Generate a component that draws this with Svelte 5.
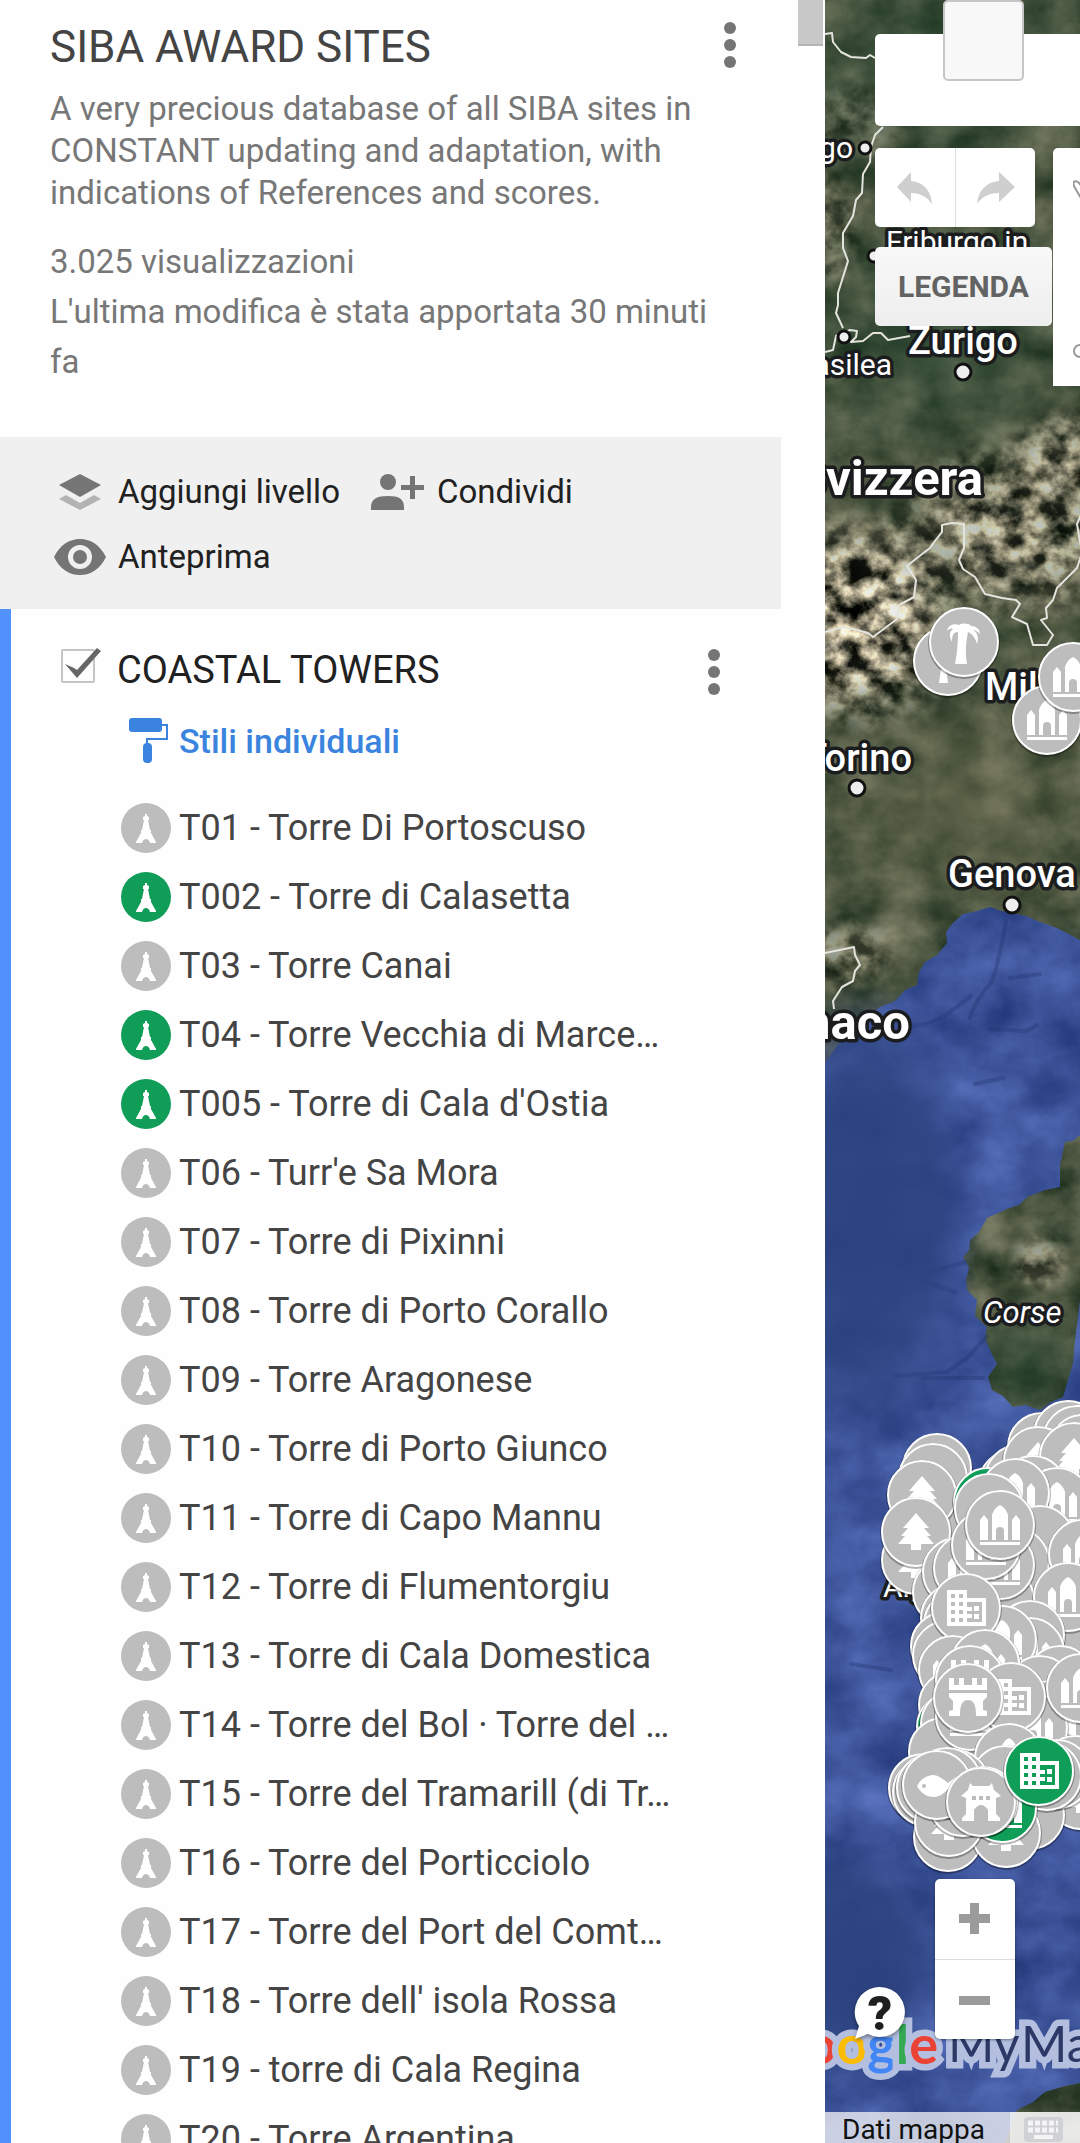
<!--
Map editor view
Side panel with the layer contents, next to the satellite map and its controls.
-->

<script lang="ts">
  interface Place {
    name: string
    done?: boolean
  }

  interface Pin {
    x: number
    y: number
    icon?: string
    done?: boolean
  }

  const places: Place[] = [
    { name: 'T01 - Torre Di Portoscuso' },
    { name: 'T002 - Torre di Calasetta', done: true },
    { name: 'T03 - Torre Canai' },
    { name: 'T04 - Torre Vecchia di Marce…', done: true },
    { name: "T005 - Torre di Cala d'Ostia", done: true },
    { name: "T06 - Turr'e Sa Mora" },
    { name: 'T07 - Torre di Pixinni' },
    { name: 'T08 - Torre di Porto Corallo' },
    { name: 'T09 - Torre Aragonese' },
    { name: 'T10 - Torre di Porto Giunco' },
    { name: 'T11 - Torre di Capo Mannu' },
    { name: 'T12 - Torre di Flumentorgiu' },
    { name: 'T13 - Torre di Cala Domestica' },
    { name: 'T14 - Torre del Bol · Torre del …' },
    { name: 'T15 - Torre del Tramarill (di Tr…' },
    { name: 'T16 - Torre del Porticciolo' },
    { name: 'T17 - Torre del Port del Comt…' },
    { name: "T18 - Torre dell' isola Rossa" },
    { name: 'T19 - torre di Cala Regina' },
    { name: 'T20 - Torre Argentina' },
  ]

  // Drawn in order, later pins lie over earlier ones
  const pins: Pin[] = [
    { x: 123, y: 661, icon: 'trunk' },
    { x: 139, y: 642, icon: 'palm' },
    { x: 222, y: 720, icon: 'ruins' },
    { x: 248, y: 677, icon: 'ruins' },
    { x: 112, y: 1468 },
    { x: 108, y: 1478 },
    { x: 120, y: 1530 },
    { x: 97, y: 1495, icon: 'tree' },
    { x: 91, y: 1560, icon: 'tree' },
    { x: 91, y: 1532, icon: 'tree' },
    { x: 217, y: 1447 },
    { x: 243, y: 1435 },
    { x: 252, y: 1440 },
    { x: 258, y: 1449 },
    { x: 188, y: 1484 },
    { x: 194, y: 1479 },
    { x: 213, y: 1461, icon: 'tree' },
    { x: 249, y: 1457, icon: 'tree' },
    { x: 163, y: 1502, done: true },
    { x: 250, y: 1530 },
    { x: 208, y: 1490 },
    { x: 232, y: 1502, icon: 'ruins' },
    { x: 190, y: 1493, icon: 'ruins' },
    { x: 215, y: 1540 },
    { x: 210, y: 1580 },
    { x: 164, y: 1508 },
    { x: 122, y: 1592 },
    { x: 132, y: 1572 },
    { x: 190, y: 1562 },
    { x: 175, y: 1600 },
    { x: 143, y: 1568, icon: 'ruins' },
    { x: 175, y: 1565, icon: 'ruins' },
    { x: 161, y: 1545, icon: 'ruins' },
    { x: 175, y: 1525, icon: 'ruins' },
    { x: 240, y: 1640, icon: 'ruins' },
    { x: 250, y: 1620 },
    { x: 258, y: 1554, icon: 'ruins' },
    { x: 243, y: 1597, icon: 'ruins' },
    { x: 130, y: 1618 },
    { x: 133, y: 1624 },
    { x: 205, y: 1635 },
    { x: 120, y: 1646 },
    { x: 122, y: 1655 },
    { x: 205, y: 1652, icon: 'ruins' },
    { x: 177, y: 1640, icon: 'ruins' },
    { x: 141, y: 1608, icon: 'building' },
    { x: 235, y: 1680 },
    { x: 215, y: 1690 },
    { x: 128, y: 1670, icon: 'ruins' },
    { x: 160, y: 1664, icon: 'ruins' },
    { x: 128, y: 1705 },
    { x: 126, y: 1727, done: true },
    { x: 130, y: 1724 },
    { x: 225, y: 1715 },
    { x: 243, y: 1732, icon: 'ruins' },
    { x: 170, y: 1730 },
    { x: 118, y: 1752 },
    { x: 145, y: 1716, icon: 'ruins' },
    { x: 208, y: 1728, icon: 'ruins' },
    { x: 256, y: 1688, icon: 'ruins' },
    { x: 145, y: 1680, icon: 'castle' },
    { x: 186, y: 1697, icon: 'building' },
    { x: 143, y: 1698, icon: 'castle' },
    { x: 184, y: 1758, icon: 'ruins' },
    { x: 180, y: 1780 },
    { x: 250, y: 1770 },
    { x: 256, y: 1795, icon: 'tree' },
    { x: 205, y: 1815 },
    { x: 98, y: 1788 },
    { x: 102, y: 1792 },
    { x: 106, y: 1788 },
    { x: 123, y: 1837 },
    { x: 181, y: 1833, icon: 'tree' },
    { x: 124, y: 1822, icon: 'tree' },
    { x: 138, y: 1802 },
    { x: 130, y: 1784 },
    { x: 122, y: 1782 },
    { x: 112, y: 1785, icon: 'fish' },
    { x: 232, y: 1774 },
    { x: 222, y: 1776 },
    { x: 177, y: 1808, icon: 'ruins', done: true },
    { x: 158, y: 1801 },
    { x: 156, y: 1802, icon: 'temple' },
    { x: 214, y: 1771, icon: 'building', done: true },
  ]

  let visible = $state(true)
  let search = $state('')
</script>

{#snippet moreIcon()}
  <svg width="12" height="46" viewBox="0 0 12 46" aria-hidden="true">
    <circle cx="6" cy="6" r="6" />
    <circle cx="6" cy="23" r="6" />
    <circle cx="6" cy="40" r="6" />
  </svg>
{/snippet}

<div class="app">
  <aside class="panel">
    <div class="content">
      <header class="info">
        <div class="title-row">
          <h1>SIBA AWARD SITES</h1>
          <button class="more" aria-label="Opzioni mappa">{@render moreIcon()}</button>
        </div>
        <p class="description">
          A very precious database of all SIBA sites in CONSTANT updating and
          adaptation, with indications of References and scores.
        </p>
        <p class="meta">
          3.025 visualizzazioni<br />
          L'ultima modifica è stata apportata 30 minuti fa
        </p>
      </header>

      <div class="toolbar">
        <button>
          <svg viewBox="0 0 54 40" aria-hidden="true">
            <path d="M5 27l7-4 14 8 14-8 7 4-21 11z" fill="#b3b3b3" />
            <path d="M26 2l21 11-21 12L5 13z" fill="#757575" />
          </svg>
          Aggiungi livello
        </button>
        <button>
          <svg viewBox="0 0 54 40" fill="#757575" aria-hidden="true">
            <circle cx="15" cy="10" r="8" />
            <path d="M-2 38v-3c0-8 6-11 17-11s16 3 16 11v3zM37 4h5v9h9v5h-9v9h-5v-9h-9v-5h9z" />
          </svg>
          Condividi
        </button>
        <button>
          <svg viewBox="0 0 54 40" aria-hidden="true">
            <path
              fill="#757575"
              fill-rule="evenodd"
              d="M0 20C6 8 15 2 26 2s20 6 26 18c-6 12-15 18-26 18S6 32 0 20zM26 8a12 12 0 1 0 0 24 12 12 0 0 0 0-24z"
            />
            <circle cx="26" cy="20" r="7" fill="#757575" />
          </svg>
          Anteprima
        </button>
      </div>

      <section class="layer">
        <div class="layer-head">
          <label>
            <span class="check">
              <input type="checkbox" bind:checked={visible} />
              {#if visible}
                <svg width="38" height="34" viewBox="0 0 38 34" aria-hidden="true">
                  <path d="M1 17l9 4 3 2L33 1l4 3-24 27z" fill="#666" />
                </svg>
              {/if}
            </span>
            <span class="layer-name">COASTAL TOWERS</span>
          </label>
          <button class="more" aria-label="Opzioni livello">{@render moreIcon()}</button>
        </div>

        <button class="styles">
          <svg width="40" height="46" viewBox="0 0 40 46" aria-hidden="true">
            <rect width="33" height="14" rx="3" fill="#3a84df" />
            <path d="M33 7h5v14H18v6" fill="none" stroke="#3a84df" stroke-width="2" />
            <rect x="14" y="25" width="9" height="20" rx="4" fill="#3a84df" />
          </svg>
          Stili individuali
        </button>

        <ul>
          {#each places as place}
            <li>
              <svg width="50" height="50" viewBox="0 0 50 50" aria-hidden="true">
                <circle cx="25" cy="25" r="25" fill={place.done ? '#109d58' : '#bdbdbd'} />
                <path
                  fill="#fff"
                  d="M24 11h2v2l2 1v3h-1l2 10h1v3l5 9v1h-6c-1-3-2-4-4-4s-3 1-4 4h-6v-1l5-9v-3h1l2-10h-1v-3l2-1z"
                />
              </svg>
              {place.name}
            </li>
          {/each}
        </ul>
      </section>
    </div>
    <div class="scrollbar"></div>
  </aside>

  <main class="map">
    <svg class="canvas" viewBox="0 0 255 2143" preserveAspectRatio="xMinYMin slice">
      <defs>
        <filter id="land" x="0" y="0" width="1" height="1" color-interpolation-filters="sRGB">
          <feTurbulence type="fractalNoise" baseFrequency="0.02 0.025" numOctaves="5" seed="4" />
          <feColorMatrix
            values="0.55 0.1 0 0 -0.03
                    0.45 0.1 0 0 0.06
                    0.42 0.1 0 0 -0.01
                    0 0 0 0 1"
          />
        </filter>
        <filter id="alps" x="0" y="0" width="1" height="1" color-interpolation-filters="sRGB">
          <feTurbulence type="fractalNoise" baseFrequency="0.045 0.05" numOctaves="5" seed="21" />
          <feColorMatrix
            values="2.7 0.4 0 0 -1
                    2.5 0.4 0 0 -0.93
                    2.2 0.4 0 0 -0.86
                    0 0 0 0 1"
          />
        </filter>
        <filter id="water" x="0" y="0" width="1" height="1" color-interpolation-filters="sRGB">
          <feTurbulence type="fractalNoise" baseFrequency="0.014 0.018" numOctaves="5" seed="12" />
          <feColorMatrix
            values="0.28 0 0 0 0.1
                    0.3 0 0 0 0.18
                    0.35 0 0 0 0.43
                    0 0 0 0 1"
          />
          <feComposite in2="SourceGraphic" operator="in" />
        </filter>
        <radialGradient id="peak">
          <stop offset="0" stop-color="#fff" />
          <stop offset="0.5" stop-color="#fff" stop-opacity="0.8" />
          <stop offset="1" stop-color="#fff" stop-opacity="0" />
        </radialGradient>
        <radialGradient id="deep">
          <stop offset="0" stop-color="#2c437f" />
          <stop offset="0.6" stop-color="#2c437f" stop-opacity="0.8" />
          <stop offset="1" stop-color="#2c437f" stop-opacity="0" />
        </radialGradient>
        <radialGradient id="plain">
          <stop offset="0" stop-color="#686a4e" stop-opacity="0.6" />
          <stop offset="1" stop-color="#686a4e" stop-opacity="0" />
        </radialGradient>
        <radialGradient id="forest">
          <stop offset="0" stop-color="#24442f" stop-opacity="0.6" />
          <stop offset="1" stop-color="#24442f" stop-opacity="0" />
        </radialGradient>
        <mask id="mountains">
          <ellipse cx="30" cy="620" rx="120" ry="120" fill="url(#peak)" />
          <ellipse cx="190" cy="530" rx="140" ry="100" fill="url(#peak)" opacity="0.75" />
          <ellipse cx="255" cy="450" rx="80" ry="50" fill="url(#peak)" opacity="0.6" />
          <ellipse cx="215" cy="1262" rx="34" ry="34" fill="url(#peak)" opacity="0.5" />
          <ellipse cx="20" cy="955" rx="60" ry="40" fill="url(#peak)" opacity="0.45" />
          <ellipse cx="30" cy="120" rx="60" ry="50" fill="url(#peak)" opacity="0.25" />
          <ellipse cx="5" cy="230" rx="35" ry="70" fill="url(#peak)" opacity="0.35" />
        </mask>

        <g id="ruins">
          <path d="M-20 15V-5l4-5 4 5v20zM12 15V-5l4-5 4 5v20zM-8 15v-25q2-7 8-10 6 3 8 10v25H4V6a4 4 0 0 0-8 0v9zM-20 17h40v3h-40z" />
        </g>
        <g id="tree">
          <path d="M0-19l13 15H8l7 8h-4l7 8H5v6H-5v-6h-13l7-8h-4l7-8h-5z" />
        </g>
        <g id="trunk">
          <path d="M-9 22l2-14h5l2 14z" />
        </g>
        <g id="palm">
          <path d="M-9 22c2-10 3-20 3-32-5 0-6 4-6 10-3-6-3-10 1-13-2-1-4 0-6 2 1-5 6-8 12-6 5-3 11-1 12 1 5 0 9 3 9 8-3-3-5-4-7-4 5 3 6 8 4 14-2-7-5-10-9-12-2 10-3 21-1 32z" />
        </g>
        <g id="building">
          <path
            fill-rule="evenodd"
            d="M-19-18H1v8h19v28h-39zM-15-14v4h4v-4zM-7-14v4h4v-4zM-15-6v4h4v-4zM-7-6v4h4v-4zM-15 2v4h4V2zM-7 2v4h4V2zM-15 10v4h4v-4zM-7 10v4h4v-4zM1-6v5h5v4H1v3h5v4H1v4h15V-6zM8-2h5v5H8zM8 6h5v5H8z"
          />
        </g>
        <g id="castle">
          <path d="M-19-20h5v7h5v-7h5v7h8v-7h5v7h5v-7h5v12h-38zM-19-5h38v4l-4 4v9l4 1v5H8c0-11-2-16-8-16s-8 5-8 16h-11v-5l4-1V3l-4-4z" />
        </g>
        <g id="fish">
          <path fill-rule="evenodd" d="M-20 1c4-8 11-11 17-11 6 1 10 5 14 8l8-6v17l-8-5c-4 4-8 8-14 8C-9 12-16 9-20 1zm7-2a2 2 0 1 0 0 4 2 2 0 0 0 0-4z" />
        </g>
        <g id="temple">
          <path
            fill-rule="evenodd"
            d="M-11-19l3 3H8l3-3 2 7 7 6-5 2v16l4 4v3H7V8Q0-2-7 8v11h-12v-3l4-4V-4l-5-2 7-6zM-9-6v4h4v-4zM-2-6v4h4v-4zM5-6v4h4v-4z"
          />
        </g>
      </defs>

      <rect width="255" height="2143" filter="url(#land)" />
      <ellipse cx="110" cy="340" rx="200" ry="150" fill="url(#forest)" />
      <ellipse cx="120" cy="60" rx="200" ry="150" fill="url(#forest)" />
      <ellipse cx="140" cy="810" rx="190" ry="130" fill="url(#plain)" />
      <ellipse cx="200" cy="1370" rx="80" ry="80" fill="url(#forest)" />
      <g mask="url(#mountains)">
        <rect width="255" height="1400" filter="url(#alps)" />
      </g>

      <g filter="url(#water)">
        <path
          d="M0 1063L20 1035 38 1020 55 1007 70 1001 80 990 92 985 94 972 100 962 112 955 122 943 121 932 128 923
             138 914 148 912 165 907 176 911 188 913 201 916 215 922 232 928 255 940V1135L248 1141 240 1142 235 1165
             235 1187 220 1190 202 1197 194 1205 182 1209 162 1218 154 1232 145 1240 144 1250 138 1257 144 1268
             141 1280 142 1290 152 1300 150 1316 162 1327 160 1338 165 1350 172 1364 163 1377 167 1390 178 1396
             188 1407 200 1405 215 1410 226 1402 238 1397 243 1380 248 1363 250 1340 253 1317 255 1300V2083L240
             2086 220 2092 208 2102 192 2110 180 2143H0z"
        />
      </g>
      <g class="trenches">
        <path d="M88 1026q20-2 34-12t24-18M145 1018q6-20 22-36 8-26 14-60M164 1029l38 2 10-6M185 978l30-4M70 1376l52-4 20-14 20-22M98 1378h60M100 1282l30 10M140 1262l-34 10M26 1664l40 6M150 1084l28-6" />
      </g>
      <ellipse cx="40" cy="1220" rx="115" ry="240" fill="url(#deep)" />
      <ellipse cx="10" cy="1960" rx="120" ry="130" fill="url(#deep)" />

      <g class="borders">
        <path d="M0 34l7-1 1 9 8 10 10 5 15 1 4-3 5 3M58 127l-8 8-4 12-1 15-7 12-1 19-6 7-3 16-10 17v15l5 13-10 32v12l-2 8 7 15M0 352l8-2 3-14 14-6 7 1-1 6-5 5 12-1 10-8h8l7 7 22-4" />
        <path d="M0 632l18-5 10 2 15 4 5 4 24-18 2-14 15-8 2-17-9-14 10-8 13-10 5-7 7-9v-7l10-2 12 1v24l-5 12 4 9 12 8 10 17 17 4 14 2 4 4-8 13 15 7 6 21h14l6-10-12-15 6-2-1-10 7-8 4-12 20-20 5-15-3-17-2-12 4-9 15 2 6-6" />
        <path d="M0 953l29-6 1 8 5 10-5 6-2 10-11 6-9 14 1 8" />
      </g>

      <g class="labels">
        <text x="28" y="158" text-anchor="end">Lussemburgo</text>
        <text x="61" y="252">Friburgo in</text>
        <text x="67" y="375" text-anchor="end">Basilea</text>
        <text class="city" x="83" y="354">Zurigo</text>
        <text class="country" x="158" y="495" text-anchor="end">Svizzera</text>
        <text class="city" x="160" y="700">Milano</text>
        <text class="city" x="87" y="771" text-anchor="end">Torino</text>
        <text class="city" x="123" y="887">Genova</text>
        <text class="country" x="85" y="1039" text-anchor="end">Monaco</text>
        <text class="region" x="158" y="1323">Corse</text>
        <text x="58" y="1597">Alghero</text>
      </g>

      <g class="towns">
        <circle cx="40" cy="148" r="6" />
        <circle cx="49" cy="256" r="6" />
        <circle cx="19" cy="337" r="6" />
        <circle cx="138" cy="372" r="8" />
        <circle cx="32" cy="788" r="8" />
        <circle cx="187" cy="905" r="8" />
      </g>

      {#each pins as pin}
        <g transform="translate({pin.x} {pin.y})">
          <circle cy="1" r="36" fill="#000" opacity="0.3" />
          <circle r="34" fill={pin.done ? '#109d58' : '#bdbdbd'} stroke="#fff" stroke-width="2" />
          {#if pin.icon}
            <use href="#{pin.icon}" fill="#fff" />
          {/if}
        </g>
      {/each}

      <g class="logo">
        <text class="google" x="113" y="2064" text-anchor="end"
          ><tspan fill="#4285f4">G</tspan><tspan fill="#ea4335">o</tspan><tspan fill="#fbbc04">o</tspan><tspan
            fill="#4285f4">g</tspan
          ><tspan fill="#34a853">l</tspan><tspan fill="#ea4335">e</tspan></text
        >
        <text x="123" y="2062">My</text>
        <text x="196" y="2062">Maps</text>
      </g>
    </svg>

    <div class="top-controls">
      <input class="search" type="text" aria-label="Cerca" bind:value={search} />
      <div class="tools">
        <div class="left-tools">
          <div class="history">
            <button aria-label="Annulla">
              <svg width="36" height="34" viewBox="0 0 36 34" aria-hidden="true">
                <path d="M0 16L14 1v9c12 1 20 9 21 23-5-7-11-11-21-11v9z" />
              </svg>
            </button>
            <button aria-label="Ripeti">
              <svg width="38" height="34" viewBox="0 0 38 34" aria-hidden="true">
                <path d="M38 16L22 1v9C10 11 1 19 0 33c5-7 11-11 22-11v9z" />
              </svg>
            </button>
          </div>
          <button class="legend">LEGENDA</button>
        </div>
        <div class="draw-tools">
          <button aria-label="Seleziona elementi">
            <svg width="34" height="42" viewBox="0 0 34 42" aria-hidden="true">
              <path d="M9 30l-8-14c-2-5 2-6 5-3l5 6V5c0-4 5-4 5 0v-2c0-3 5-3 5 0v2c0-3 5-3 5 0v4c0-3 5-3 5 0v19l-4 12H15z" />
            </svg>
          </button>
          <button aria-label="Traccia una linea">
            <svg width="34" height="34" viewBox="0 0 34 34" aria-hidden="true">
              <circle cx="7" cy="17" r="6" />
              <path d="M13 15l14-8" />
            </svg>
          </button>
        </div>
      </div>
    </div>

    <div class="popup"></div>

    <button class="help" aria-label="Guida">
      <svg width="52" height="56" viewBox="0 0 52 56" aria-hidden="true">
        <path d="M26 0a25 25 0 1 1-12 47L1 52l4-13A25 25 0 0 1 26 0z" fill="#fff" />
        <text x="26" y="43" text-anchor="middle">?</text>
      </svg>
    </button>

    <div class="zoom">
      <button aria-label="Zoom avanti">
        <svg width="32" height="32" viewBox="0 0 32 32" aria-hidden="true">
          <path d="M11 0h9v11h11v9H20v11h-9V20H0v-9h11z" />
        </svg>
      </button>
      <button aria-label="Zoom indietro">
        <svg width="32" height="32" viewBox="0 0 32 32" aria-hidden="true">
          <path d="M0 12h31v9H0z" />
        </svg>
      </button>
    </div>

    <footer>
      <a href="#data">Dati mappa</a>
      <button aria-label="Scorciatoie da tastiera">
        <svg width="40" height="26" viewBox="0 0 40 26" aria-hidden="true">
          <rect width="39" height="25" rx="4" fill="#cfd1d4" />
          <path
            d="M4 6h30M4 13h30"
            fill="none"
            stroke="#f4f4f4"
            stroke-width="5"
            stroke-dasharray="5 2"
          />
          <path d="M10 18h19v4H10z" fill="#f4f4f4" />
        </svg>
      </button>
    </footer>
  </main>
</div>

<style>
  :global(body) {
    margin: 0;
  }

  .app {
    display: flex;
    height: 100vh;
    overflow: hidden;
    background: #fefefe;
    font-family: Roboto, 'Liberation Sans', sans-serif;
    font-size: 33px;
    color: #212121;
  }

  button {
    margin: 0;
    padding: 0;
    border: 0;
    background: none;
    font: inherit;
    color: inherit;
    cursor: pointer;
  }

  svg {
    display: block;
    flex: none;
  }

  h1,
  p,
  ul {
    margin: 0;
    padding: 0;
    font-weight: 400;
  }

  /* Side panel */

  .panel {
    display: flex;
    flex: none;
    width: 825px;
  }

  .content {
    flex: 1;
  }

  .scrollbar {
    width: 25px;
    height: 46px;
    margin: 0 2px 0 17px;
    border-bottom: 2px solid #b5b5b5;
    background: #c8c8c8;
    box-sizing: border-box;
  }

  .info {
    padding: 19px 45px 50px 50px;
  }

  .title-row,
  .layer-head {
    display: flex;
    justify-content: space-between;
  }

  h1 {
    font-size: 44px;
    line-height: 56px;
    color: #444;
  }

  .more {
    align-self: flex-start;
    fill: #757575;
  }

  .title-row .more {
    margin-top: 3px;
  }

  .description {
    margin-top: 13px;
    line-height: 42px;
    color: #777;
  }

  .meta {
    margin-top: 23px;
    line-height: 50px;
    color: #777;
  }

  .toolbar {
    display: flex;
    flex-wrap: wrap;
    column-gap: 33px;
    padding: 22px 54px 20px;
    background: #f0f0f0;
  }

  .toolbar button {
    display: flex;
    align-items: center;
    gap: 10px;
    height: 65px;
  }

  .toolbar svg {
    width: 54px;
    height: 40px;
    overflow: visible;
  }

  .layer {
    padding: 36px 61px 0 50px;
    border-left: 11px solid #5091fb;
  }

  .layer-head label {
    display: flex;
    gap: 22px;
  }

  .check {
    position: relative;
    padding-top: 4px;
  }

  .check input {
    display: block;
    width: 34px;
    height: 34px;
    margin: 0;
    border: 2px solid #c6c6c6;
    border-radius: 2px;
    appearance: none;
  }

  .check svg {
    position: absolute;
    top: 2px;
    left: 3px;
  }

  .layer-name {
    font-size: 38px;
    line-height: 50px;
  }

  .layer-head .more {
    margin-top: 4px;
  }

  .styles {
    display: flex;
    gap: 10px;
    margin: 23px 0 29px 68px;
    font-size: 34px;
    font-weight: 500;
    line-height: 46px;
    color: #3a84df;
  }

  ul {
    padding-left: 60px;
    list-style: none;
  }

  li {
    display: flex;
    align-items: center;
    gap: 8px;
    height: 69px;
    font-size: 36px;
    color: #444;
    white-space: nowrap;
  }

  /* Map */

  .map {
    position: relative;
    flex: 1;
    min-width: 0;
    overflow: hidden;
  }

  .canvas {
    width: 100%;
    height: 100%;
  }

  .trenches {
    fill: none;
    stroke: #20346e;
    stroke-width: 4;
    stroke-linecap: round;
    stroke-linejoin: round;
    opacity: 0.35;
  }

  .borders {
    fill: none;
    stroke: #e4e4de;
    stroke-width: 2;
    stroke-linejoin: round;
  }

  .labels {
    fill: #fff;
    stroke: #1b1c1e;
    stroke-width: 7;
    stroke-linejoin: round;
    paint-order: stroke;
    font-size: 30px;
  }

  .labels .city {
    font-size: 38px;
    font-weight: 500;
  }

  .labels .country {
    font-size: 49px;
    font-weight: 700;
  }

  .labels .region {
    font-size: 31px;
    font-style: italic;
  }

  .towns {
    fill: #eee;
    stroke: #111;
    stroke-width: 3;
  }

  .logo {
    fill: #2c3966;
    stroke: #b4bfe0;
    stroke-width: 13;
    paint-order: stroke;
    font-family: Lato, 'Open Sans', sans-serif;
    font-size: 50px;
  }

  .logo .google {
    font-size: 54px;
    font-weight: 700;
  }

  .top-controls {
    position: absolute;
    top: 34px;
    left: 50px;
    right: 0;
  }

  .search {
    display: block;
    width: 100%;
    height: 92px;
    padding: 0 20px;
    border: 0;
    border-radius: 5px 0 0 5px;
    background: #fff;
    font: inherit;
    box-sizing: border-box;
  }

  .tools {
    display: flex;
    align-items: flex-start;
    gap: 1px;
    margin-top: 22px;
  }

  .left-tools {
    display: flex;
    flex: none;
    flex-direction: column;
    align-items: flex-start;
    gap: 20px;
    width: 177px;
  }

  .history {
    display: flex;
    border-radius: 5px;
    background: #fff;
    fill: #cfcfcf;
  }

  .history button {
    display: flex;
    align-items: center;
    justify-content: center;
    width: 80px;
    height: 79px;
  }

  .history button + button {
    border-left: 1px solid #ddd;
  }

  .legend {
    width: 100%;
    height: 79px;
    border-radius: 5px;
    background: linear-gradient(#f8f8f8, #eee);
    font-size: 30px;
    font-weight: 700;
    color: #636363;
  }

  .draw-tools {
    display: flex;
    flex: none;
    flex-direction: column;
    justify-content: space-between;
    height: 238px;
    padding: 22px 20px 18px;
    border-radius: 5px 0 0;
    background: #fff;
    fill: none;
    stroke: #999;
    stroke-width: 2;
    box-sizing: border-box;
  }

  .popup {
    position: absolute;
    top: 0;
    left: 118px;
    width: 77px;
    height: 77px;
    border: 2px solid #c6c6c6;
    border-radius: 5px;
    background: #f8f8f8;
  }

  .help {
    position: absolute;
    bottom: 100px;
    left: 29px;
    filter: drop-shadow(0 2px 2px rgba(0, 0, 0, 0.4));
  }

  .help text {
    fill: #1f1f1f;
    font-size: 48px;
    font-weight: 900;
  }

  .zoom {
    position: absolute;
    bottom: 104px;
    left: 110px;
    border-radius: 5px;
    background: #fff;
    fill: #9b9b9b;
    box-shadow: 0 1px 3px rgba(0, 0, 0, 0.4);
  }

  .zoom button {
    display: flex;
    align-items: center;
    justify-content: center;
    width: 80px;
    height: 80px;
  }

  .zoom button + button {
    border-top: 1px solid #ddd;
  }

  footer {
    position: absolute;
    right: 0;
    bottom: 0;
    left: 0;
    display: flex;
    height: 31px;
    background: rgba(245, 245, 245, 0.75);
  }

  footer a {
    width: 168px;
    padding-left: 17px;
    font-size: 28px;
    line-height: 36px;
    color: #111;
    text-decoration: none;
  }

  footer button {
    flex: 1;
    padding: 4px 0 0 14px;
    background: rgba(248, 248, 248, 0.6);
  }
</style>
